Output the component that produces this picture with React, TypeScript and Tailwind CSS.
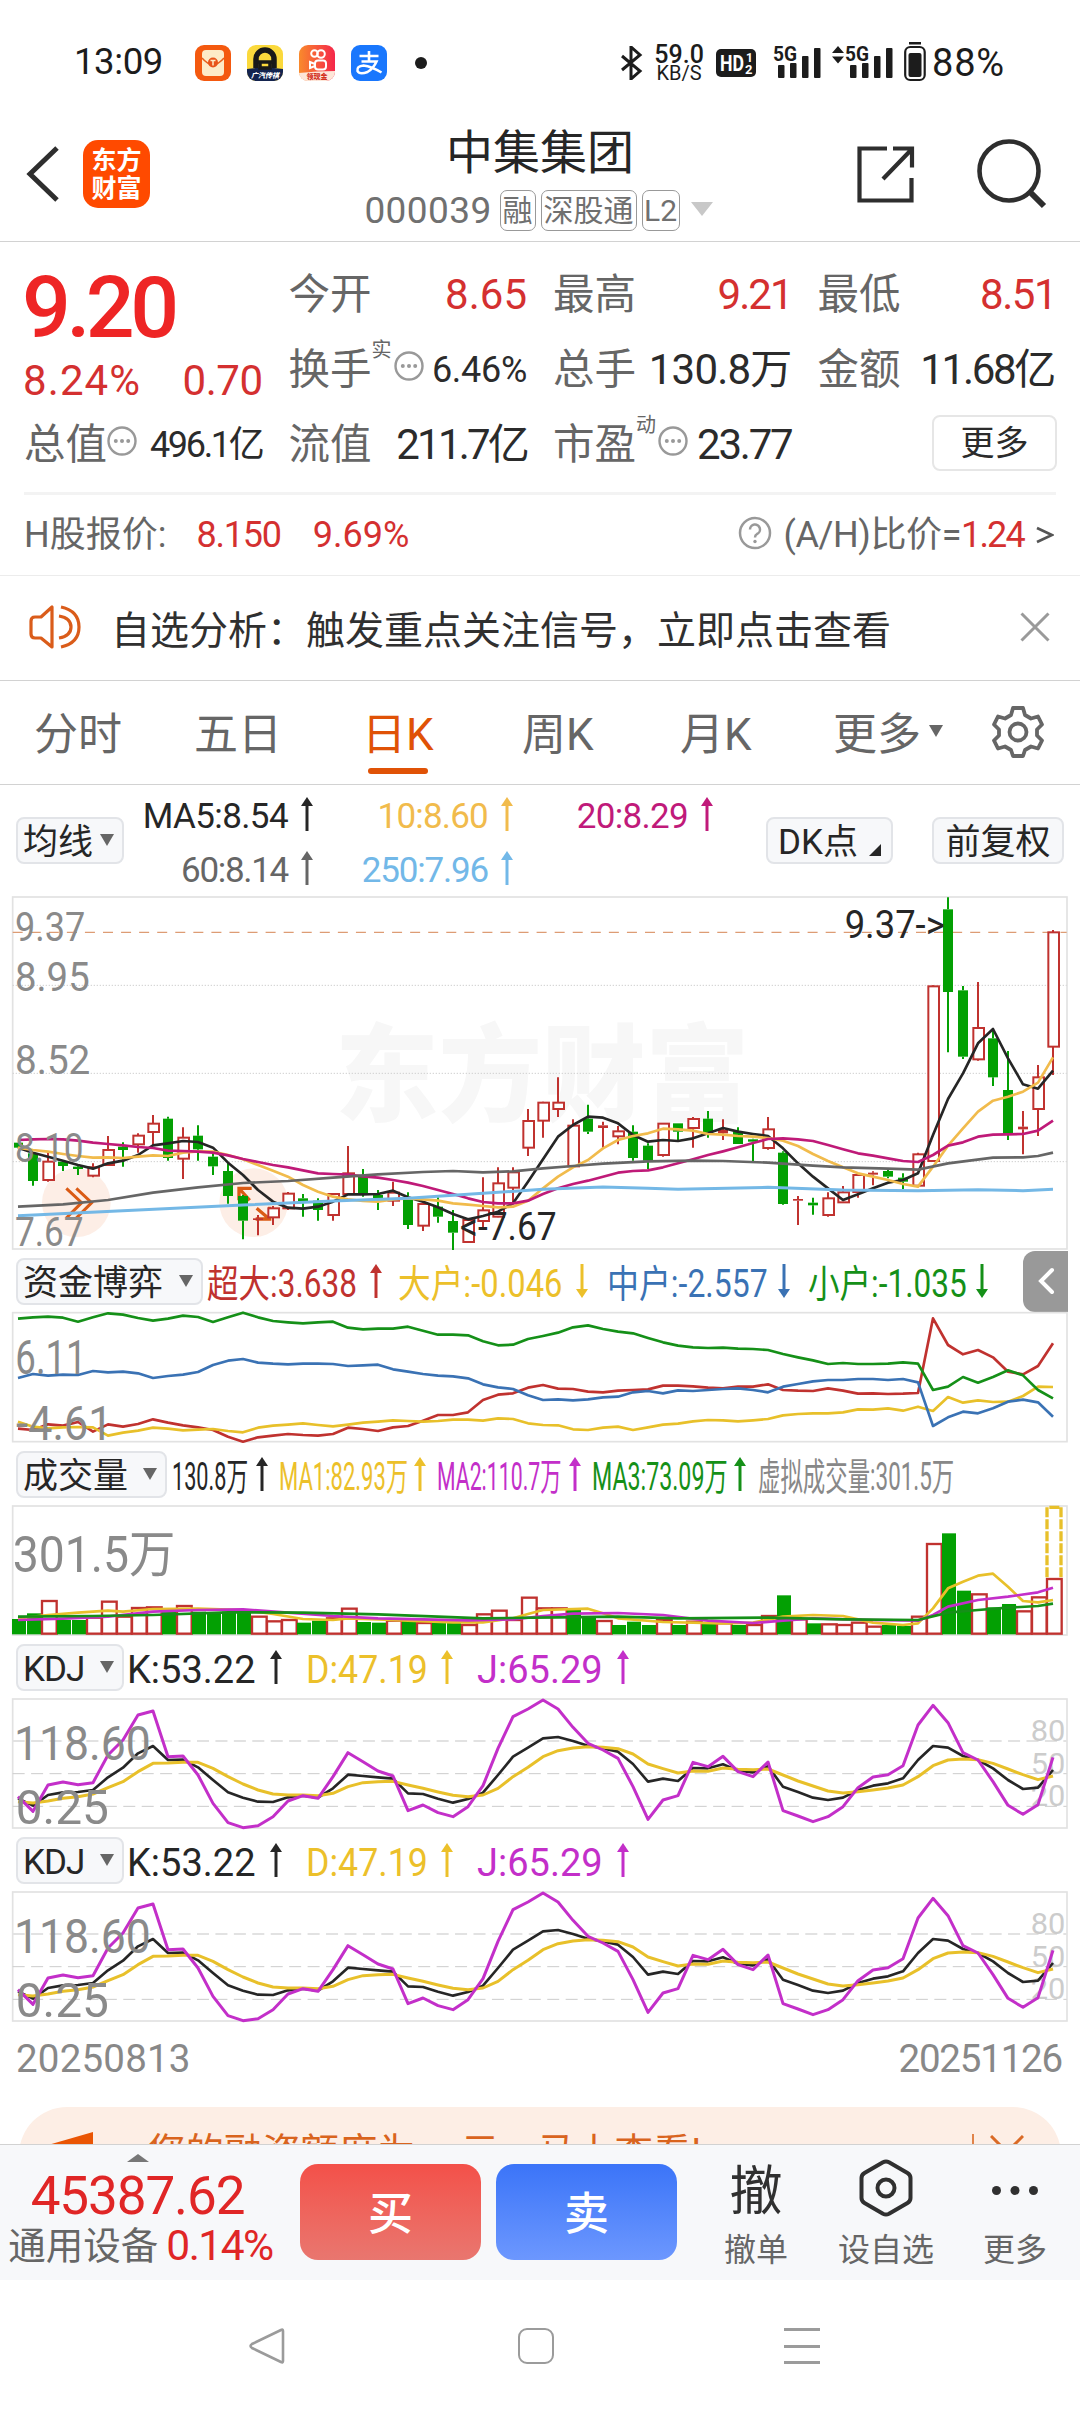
import type { ReactNode } from 'react';
import clsx from 'clsx';

type Point = [number, number];
// wick top, body top, body bottom, wick bottom, direction
type Candle = [number, number, number, number, 'r' | 'g'];
type Bar = [number, 'r' | 'g'];

const RED = '#c0322f';
const GREEN = '#03a003';
const YELLOW = '#e8c02a';
const PURPLE = '#c32fc9';
const BLUE = '#3a72b4';
const DARK = '#262626';

// every chart uses 3 units per pixel, one trading day is 15px wide
const dayX = (i: number) => 54 + i * 45;

const candles: Candle[] = [
  [788, 788, 803, 803, 'g'], [820, 820, 903, 917, 'g'], [815, 845, 900, 905, 'r'], [840, 845, 858, 873, 'g'],
  [855, 860, 867, 885, 'g'], [850, 862, 887, 892, 'r'], [768, 810, 855, 857, 'r'], [787, 800, 810, 860, 'g'],
  [760, 767, 793, 818, 'r'], [705, 731, 756, 795, 'r'], [710, 716, 834, 842, 'g'], [742, 773, 836, 897, 'r'],
  [736, 767, 808, 842, 'g'], [820, 830, 859, 885, 'g'], [850, 873, 948, 971, 'g'], [945, 948, 1022, 1078, 'g'],
  [1005, 1015, 1020, 1066, 'r'], [978, 985, 1012, 1035, 'r'], [936, 941, 985, 990, 'r'], [942, 955, 965, 1010, 'g'],
  [955, 962, 990, 1022, 'g'], [942, 942, 1005, 1022, 'r'], [798, 880, 942, 942, 'r'], [867, 890, 940, 950, 'g'],
  [930, 945, 960, 990, 'g'], [905, 938, 962, 978, 'r'], [937, 955, 1035, 1047, 'g'], [972, 972, 1037, 1053, 'r'],
  [952, 980, 1010, 1028, 'g'], [990, 1023, 1058, 1110, 'g'], [1018, 1020, 1086, 1088, 'r'], [892, 991, 1023, 1042, 'r'],
  [862, 910, 1010, 1012, 'r'], [862, 877, 923, 970, 'r'], [687, 723, 803, 828, 'r'], [665, 668, 722, 773, 'r'],
  [592, 668, 687, 711, 'r'], [718, 737, 859, 862, 'r'], [674, 716, 755, 762, 'g'], [725, 736, 744, 803, 'r'],
  [738, 754, 769, 793, 'r'], [736, 755, 834, 842, 'g'], [790, 797, 842, 867, 'g'], [730, 731, 825, 830, 'r'],
  [730, 730, 755, 783, 'g'], [711, 717, 744, 803, 'r'], [693, 716, 760, 773, 'g'], [718, 750, 760, 780, 'r'],
  [742, 755, 792, 792, 'g'], [776, 778, 785, 845, 'g'], [711, 748, 804, 809, 'r'], [814, 818, 972, 974, 'g'],
  [948, 957, 962, 1035, 'r'], [953, 968, 976, 1004, 'g'], [937, 955, 1005, 1010, 'r'], [918, 937, 967, 967, 'r'],
  [880, 885, 936, 953, 'r'], [874, 878, 884, 916, 'r'], [867, 873, 890, 895, 'g'], [880, 893, 905, 927, 'g'],
  [818, 823, 917, 920, 'r'], [316, 319, 843, 845, 'r'], [52, 88, 336, 517, 'g'], [318, 331, 530, 537, 'g'],
  [306, 444, 538, 542, 'r'], [450, 475, 592, 618, 'g'], [513, 630, 762, 780, 'g'], [693, 740, 748, 823, 'r'],
  [555, 592, 687, 768, 'r'], [150, 157, 500, 585, 'r'],
];

const ma5 = [
  803, 818, 830, 842, 855, 866, 850, 842, 825, 796, 790, 783, 786, 803, 848, 885, 930, 965, 983, 986, 980, 965, 943, 943,
  942, 932, 952, 965, 982, 1002, 1018, 1008, 995, 970, 905, 838, 770, 735, 710, 713, 730, 765, 785, 780, 783, 775, 760,
  744, 755, 762, 768, 805, 850, 890, 925, 960, 943, 925, 908, 900, 880, 765, 657, 580, 490, 447, 535, 613, 626, 572,
];
const ma10 = [
  803, 810, 815, 822, 828, 833, 832, 834, 830, 826, 828, 818, 814, 815, 825, 838, 855, 872, 890, 915, 935, 950, 958, 963,
  965, 958, 955, 958, 962, 970, 974, 978, 982, 980, 962, 925, 890, 862, 840, 805, 780, 768, 760, 746, 748, 752, 762, 764,
  768, 770, 774, 782, 798, 822, 843, 862, 880, 890, 900, 912, 920, 860, 797, 745, 695, 662, 650, 635, 608, 532,
];
const ma20 = [
  780, 778, 777, 778, 782, 788, 792, 796, 801, 804, 812, 813, 815, 818, 826, 837, 846, 855, 862, 871, 880, 882, 884, 889,
  893, 900, 908, 918, 930, 942, 955, 966, 970, 970, 962, 942, 925, 912, 902, 890, 878, 873, 871, 862, 850, 838, 825, 814,
  802, 789, 777, 775, 778, 783, 795, 808, 820, 827, 835, 843, 846, 825, 797, 787, 770, 764, 763, 762, 752, 722,
];
const ma60: Point[] = [
  [0, 980], [3, 973], [6, 960], [9, 938], [12, 922], [15, 909], [18, 903], [21, 893], [24, 883], [27, 876], [29, 873],
  [31, 877], [33, 874], [35, 865], [37, 858], [39, 851], [42, 844], [45, 842], [47, 843], [50, 848], [53, 857], [55, 862],
  [58, 866], [60, 869], [62, 850], [65, 833], [67, 832], [68, 828], [69, 818],
];
const ma250: Point[] = [
  [0, 1007], [15, 975], [21, 963], [26, 955], [31, 940], [35, 928], [39, 921], [42, 925], [44, 928], [50, 922], [55, 930],
  [60, 932], [64, 929], [67, 932], [69, 928],
];

const fundGreen = [
  236, 232, 230, 233, 245, 232, 220, 224, 234, 242, 236, 227, 231, 246, 232, 218, 232, 243, 247, 250, 247, 245, 263, 268,
  266, 266, 260, 272, 284, 284, 286, 304, 316, 314, 297, 288, 278, 262, 256, 267, 275, 280, 294, 307, 317, 322, 324, 323,
  326, 327, 330, 342, 352, 361, 372, 369, 372, 372, 371, 367, 371, 450, 440, 411, 428, 411, 391, 406, 450, 475,
];
const fundBlue = [
  414, 402, 407, 404, 405, 393, 397, 395, 400, 414, 408, 404, 396, 375, 362, 357, 368, 371, 373, 371, 371, 372, 378, 376,
  374, 388, 395, 402, 407, 409, 415, 433, 442, 447, 466, 480, 478, 481, 478, 472, 470, 457, 453, 460, 451, 453, 450, 447,
  445, 450, 457, 440, 432, 424, 420, 420, 417, 417, 420, 417, 427, 558, 532, 515, 520, 505, 485, 479, 487, 530,
];
const fundRed = [
  566, 570, 553, 557, 546, 575, 553, 560, 552, 538, 548, 556, 562, 570, 590, 605, 592, 587, 582, 585, 587, 582, 563, 567,
  573, 562, 558, 542, 525, 525, 517, 480, 464, 460, 443, 435, 446, 447, 455, 457, 452, 450, 448, 437, 437, 439, 443, 445,
  440, 440, 433, 450, 452, 453, 445, 452, 461, 460, 462, 461, 459, 235, 315, 343, 330, 352, 395, 403, 378, 310,
];
const fundYellow = [
  545, 560, 565, 562, 561, 562, 587, 578, 572, 563, 566, 571, 569, 567, 573, 577, 563, 557, 554, 550, 555, 559, 554, 548,
  545, 541, 543, 545, 543, 539, 539, 542, 535, 537, 550, 555, 556, 568, 570, 563, 560, 570, 562, 554, 551, 544, 540, 541,
  544, 541, 537, 526, 522, 520, 520, 517, 508, 509, 505, 512, 500, 513, 471, 488, 481, 486, 485, 468, 440, 441,
];

const volumes: Bar[] = [
  [1137, 'g'], [1120, 'g'], [1083, 'r'], [1140, 'g'], [1140, 'g'], [1133, 'r'], [1085, 'r'], [1130, 'r'], [1104, 'r'],
  [1102, 'r'], [1115, 'g'], [1098, 'r'], [1115, 'g'], [1122, 'g'], [1115, 'g'], [1118, 'g'], [1130, 'r'], [1144, 'r'],
  [1140, 'r'], [1148, 'g'], [1142, 'g'], [1135, 'r'], [1106, 'r'], [1146, 'g'], [1148, 'g'], [1142, 'r'], [1143, 'g'],
  [1149, 'r'], [1148, 'g'], [1147, 'g'], [1155, 'r'], [1123, 'r'], [1112, 'r'], [1140, 'r'], [1073, 'r'], [1105, 'r'],
  [1105, 'r'], [1108, 'g'], [1130, 'g'], [1143, 'r'], [1155, 'g'], [1145, 'g'], [1155, 'g'], [1140, 'r'], [1155, 'g'],
  [1145, 'r'], [1150, 'g'], [1150, 'r'], [1155, 'g'], [1155, 'r'], [1128, 'r'], [1066, 'g'], [1138, 'r'], [1150, 'g'],
  [1153, 'r'], [1155, 'r'], [1148, 'r'], [1160, 'r'], [1155, 'g'], [1158, 'g'], [1130, 'r'], [912, 'r'], [880, 'g'],
  [1052, 'g'], [1063, 'r'], [1102, 'g'], [1092, 'g'], [1114, 'r'], [1072, 'r'], [1017, 'r'],
];
const volMa1: Point[] = [
  [0, 1135], [2, 1125], [4, 1118], [6, 1112], [7, 1115], [9, 1107], [12, 1106], [15, 1110], [17, 1122], [19, 1137],
  [21, 1140], [22, 1135], [24, 1138], [26, 1142], [29, 1147], [31, 1147], [33, 1135], [34, 1122], [35, 1110], [38, 1106],
  [39, 1120], [40, 1135], [43, 1146], [47, 1150], [49, 1148], [51, 1130], [53, 1125], [55, 1128], [56, 1138], [57, 1148],
  [59, 1155], [60, 1150], [61, 1105], [62, 1045], [63, 1025], [64, 1007], [65, 1001], [66, 1040], [67, 1083], [68, 1087],
  [69, 1080],
];
const volMa2: Point[] = [
  [0, 1140], [3, 1136], [6, 1130], [9, 1115], [12, 1110], [15, 1108], [18, 1118], [21, 1128], [24, 1135], [30, 1141],
  [33, 1138], [35, 1128], [37, 1121], [40, 1119], [43, 1125], [46, 1142], [49, 1149], [51, 1142], [53, 1135], [57, 1140],
  [60, 1142], [61, 1125], [62, 1100], [64, 1080], [66, 1070], [68, 1057], [69, 1043],
];
const volMa3: Point[] = [
  [0, 1130], [5, 1128], [9, 1125], [14, 1117], [19, 1118], [24, 1123], [28, 1130], [31, 1135], [36, 1132], [40, 1130],
  [44, 1135], [50, 1133], [55, 1138], [60, 1140], [62, 1118], [64, 1110], [66, 1103], [68, 1098], [69, 1091],
];

const kdjJ = [
  470, 514, 435, 426, 434, 428, 345, 300, 225, 213, 350, 348, 405, 490, 548, 563, 557, 530, 483, 467, 475, 410, 338, 365,
  393, 408, 512, 495, 518, 530, 500, 437, 325, 230, 207, 180, 207, 262, 310, 330, 355, 440, 538, 480, 467, 367, 380, 349,
  395, 410, 366, 512, 528, 545, 530, 500, 443, 411, 404, 377, 255, 196, 248, 338, 360, 425, 496, 523, 494, 352,
];
const kdjK = [
  475, 497, 465, 457, 456, 450, 412, 383, 340, 318, 360, 359, 382, 420, 457, 473, 485, 486, 472, 467, 473, 445, 404, 408,
  412, 416, 460, 462, 476, 488, 477, 458, 405, 350, 323, 295, 291, 303, 317, 325, 335, 372, 425, 416, 423, 384, 385, 373,
  392, 397, 379, 440, 456, 473, 480, 473, 450, 437, 430, 415, 360, 318, 323, 348, 360, 385, 420, 447, 443, 390,
];
const kdjD = [
  485, 489, 483, 475, 470, 462, 443, 425, 395, 370, 369, 367, 367, 385, 410, 432, 450, 462, 465, 465, 467, 460, 440, 428,
  425, 424, 435, 445, 456, 466, 470, 465, 445, 410, 382, 350, 332, 324, 320, 322, 326, 342, 372, 386, 399, 393, 394, 384,
  388, 389, 387, 405, 423, 438, 453, 459, 455, 450, 444, 435, 410, 377, 360, 357, 359, 370, 387, 404, 419, 408,
];

function Line({ data, color, width = 8 }: { data: (number | Point)[]; color: string; width?: number }) {
  const points = data
    .map((d, i) => (typeof d === 'number' ? `${dayX(i)},${d}` : `${dayX(d[0])},${d[1]}`))
    .join(' ');
  return <polyline points={points} fill="none" stroke={color} strokeWidth={width} strokeLinejoin="round" />;
}

function AxisLabel({ x, y, w, size, color = '#8a8a8a', children }: {
  x: number; y: number; w: number; size: number; color?: string; children: string;
}) {
  return (
    <text x={x} y={y} fontSize={size} fill={color} textLength={w} lengthAdjust="spacingAndGlyphs">
      {children}
    </text>
  );
}

function Frame({ top, bottom }: { top: number; bottom: number }) {
  return <rect x="38" y={top} width="3163" height={bottom - top} fill="none" stroke="#e2e2e2" strokeWidth="5" />;
}

function PriceChart() {
  return (
    <svg viewBox="0 45 3240 1068" className="block w-[1080px] h-[356px] overflow-visible">
      <text x="1005" y="700" fontSize="318" fontWeight="900" fill="#f7f7f7" textLength="1242" lengthAdjust="spacingAndGlyphs">东方财富</text>
      <Frame top={51} bottom={1107} />
      {[316, 580, 845].map((y) => (
        <line key={y} x1="38" x2="3200" y1={y} y2={y} stroke="#cfcfcf" strokeWidth="3" strokeDasharray="4 5" />
      ))}
      <circle cx="229" cy="968" r="103" fill="#fdeee6" />
      <circle cx="761" cy="968" r="103" fill="#fdeee6" />
      <line x1="38" x2="3200" y1="157" y2="157" stroke="#dd9c74" strokeWidth="4" strokeDasharray="30 24.2" />
      <g fill="none" stroke="#da5a14" strokeWidth="9">
        <path d="M199 925l46 43-46 46M229 925l46 43-46 46" />
        <path d="M755 925h-38v36M719 927l30 34M770 985l38 32M809 980v37h-42" strokeWidth="10" />
      </g>
      {candles.map(([hi, top, bottom, lo, dir], i) => {
        const x = dayX(i);
        const solid = dir === 'g' || bottom - top < 12;
        const color = dir === 'g' ? GREEN : RED;
        return (
          <g key={i} stroke={color} strokeWidth="6">
            <line x1={x} x2={x} y1={hi} y2={top} />
            <line x1={x} x2={x} y1={bottom} y2={lo} />
            {solid ? (
              <rect x={i ? x - 15 : 42} y={top} width={i ? 30 : 27} height={bottom - top} fill={color} stroke="none" />
            ) : (
              <rect x={x - 14} y={top} width="32" height={bottom - top} fill="#fff" />
            )}
          </g>
        );
      })}
      <Line data={ma5} color={DARK} />
      <Line data={ma10} color="#f1bb4c" />
      <Line data={ma20} color="#bf1a78" />
      <Line data={ma60} color="#666" />
      <Line data={ma250} color="#74b8e6" width={9} />
      <AxisLabel x={45} y={182} w={211} size={120}>9.37</AxisLabel>
      <AxisLabel x={45} y={334} w={224} size={120}>8.95</AxisLabel>
      <AxisLabel x={45} y={583} w={226} size={120}>8.52</AxisLabel>
      <AxisLabel x={45} y={847} w={206} size={120}>8.10</AxisLabel>
      <AxisLabel x={45} y={1099} w={206} size={120}>7.67</AxisLabel>
      <AxisLabel x={1380} y={1081} w={290} size={114} color={DARK}>{'<-7.67'}</AxisLabel>
      <AxisLabel x={2534} y={175} w={300} size={118} color={DARK}>{'9.37->'}</AxisLabel>
    </svg>
  );
}

function FundChart() {
  return (
    <svg viewBox="0 213 3240 399" className="block w-[1080px] h-[133px] overflow-visible">
      <Frame top={218} bottom={605} />
      <Line data={fundRed} color={RED} />
      <Line data={fundYellow} color={YELLOW} />
      <Line data={fundBlue} color={BLUE} />
      <Line data={fundGreen} color="#159018" />
      <AxisLabel x={46} y={403} w={214} size={144}>6.11</AxisLabel>
      <AxisLabel x={48} y={601} w={290} size={144}>-4.61</AxisLabel>
    </svg>
  );
}

function VolumeChart() {
  return (
    <svg viewBox="0 792 3240 399" className="block w-[1080px] h-[133px] overflow-visible">
      <Frame top={798} bottom={1185} />
      {volumes.map(([top, dir], i) =>
        dir === 'g' ? (
          <rect key={i} x={dayX(i) - 18} y={top} width="42" height={1183 - top} fill={GREEN} />
        ) : (
          <rect key={i} x={dayX(i) - 18} y={top} width="44" height={1181 - top} fill="#fff" stroke={RED} strokeWidth="7" />
        )
      )}
      <path d="M3141 1012V800M3183 1012V800M3148 802h30" fill="none" stroke={YELLOW} strokeWidth="10" strokeDasharray="30 6" />
      <Line data={volMa1} color={YELLOW} />
      <Line data={volMa2} color={PURPLE} />
      <Line data={volMa3} color="#159018" />
      <AxisLabel x={38} y={995} w={488} size={150}>301.5万</AxisLabel>
    </svg>
  );
}

function KdjChart() {
  return (
    <svg viewBox="0 171 3240 399" className="block w-[1080px] h-[133px] overflow-visible">
      <Frame top={177} bottom={564} />
      {[303, 401, 499].map((y, i) => (
        <g key={y}>
          <line
            x1="38" x2="3200" y1={y} y2={y} stroke={i ? '#cccccc' : '#e2e2e2'}
            strokeWidth={i ? 3 : 6} strokeDasharray="36 19.3"
          />
          <AxisLabel x={3092} y={y} w={104} size={90} color="#cccccc">{['80', '50', '20'][i]}</AxisLabel>
        </g>
      ))}
      <Line data={kdjK} color={DARK} />
      <Line data={kdjD} color={YELLOW} width={9} />
      <Line data={kdjJ} color={PURPLE} width={9} />
      <AxisLabel x={42} y={360} w={410} size={146}>118.60</AxisLabel>
      <AxisLabel x={47} y={553} w={280} size={146}>0.25</AxisLabel>
    </svg>
  );
}

function Arrow({ down, className }: { down?: boolean; className?: string }) {
  return (
    <svg viewBox="0 0 12 34" className={clsx('w-3 h-[34px] shrink-0', down && 'rotate-180', className)}>
      <path d="M6 0l6 9H0z" fill="currentColor" />
      <path d="M6 6v28" stroke="currentColor" strokeWidth="3" />
    </svg>
  );
}

function Caret({ className }: { className?: string }) {
  return (
    <svg viewBox="0 0 14 12" className={clsx('w-3.5 h-3 text-[#666]', className)}>
      <path d="M0 0h14L7 12z" fill="currentColor" />
    </svg>
  );
}

function Picker({ label, className }: { label: string; className: string }) {
  return (
    <button
      className={clsx(
        'flex items-center justify-between h-[47px] pl-[5px] pr-[8px] rounded-lg border-2 border-[#e2e4e8] bg-[#f7f8fa] text-[35px] leading-none text-[#262626] shrink-0',
        className
      )}
    >
      <span className="pt-[5px]">{label}</span>
      <Caret />
    </button>
  );
}

function Indicator({ className, scale, arrow, children }: {
  className: string; scale: string; arrow?: 'up' | 'down'; children: string;
}) {
  return (
    <div className={clsx('flex items-center justify-between shrink-0', className)}>
      <span className="w-0 pt-[5px] whitespace-nowrap">
        <span className={clsx('inline-block origin-left', scale)}>{children}</span>
      </span>
      {arrow && <Arrow down={arrow === 'down'} />}
    </div>
  );
}

function MoreDot() {
  return (
    <svg viewBox="0 0 30 30" className="size-[30px] shrink-0 mb-[7px]">
      <circle cx="15" cy="15" r="13.500" fill="none" stroke="#999" strokeWidth="2.400" />
      <g fill="#999">
        <circle cx="8.800" cy="15" r="2" />
        <circle cx="15" cy="15" r="2" />
        <circle cx="21.200" cy="15" r="2" />
      </g>
    </svg>
  );
}

function Quote({ label, sup, dot, children }: { label: string; sup?: string; dot?: boolean; children: ReactNode }) {
  return (
    <div className="flex items-center h-[75px] whitespace-nowrap">
      <span className="text-[41.5px] text-[#666]">{label}</span>
      {sup && <span className="text-xl text-[#666] -mt-10 w-[22px] shrink-0">{sup}</span>}
      {dot && <MoreDot />}
      <span className="flex-1 flex justify-end">{children}</span>
    </div>
  );
}

function Signal({ arrows }: { arrows?: boolean }) {
  return (
    <svg viewBox="0 0 64 40" className="w-16 h-10 overflow-visible">
      {arrows && <path d="M0 10l6-7 6 7zM0 13.500h12l-6 7z" fill="#1c1c1c" />}
      <text x="13" y="18" fontSize="21" fontWeight="700" fill="#1c1c1c" textLength="24" lengthAdjust="spacingAndGlyphs">5G</text>
      <g fill="#1c1c1c">
        <rect x="18" y="22" width="6.500" height="13" rx="1" />
        <rect x="30" y="20" width="6.500" height="15" rx="1" />
        <rect x="42" y="13" width="6.500" height="22" rx="1" />
        <rect x="54" y="5" width="6.500" height="30" rx="1" />
      </g>
    </svg>
  );
}

function StatusBar() {
  return (
    <div className="flex items-center h-[125px] pl-[74px] pr-[75px] text-[#1c1c1c] leading-none">
      <span className="w-[121px] text-[36.5px] tracking-[-0.4px]">13:09</span>
      <div className="flex items-center gap-4">
        <svg viewBox="0 0 36 36" className="size-9">
          <rect width="36" height="36" rx="9" fill="#f4590f" />
          <rect x="7" y="5" width="22" height="26" rx="4" fill="#fdebc8" />
          <path d="M7 13q11 13 22 0" fill="none" stroke="#e8601c" strokeWidth="1.500" />
          <circle cx="18" cy="17.500" r="5" fill="#e8541a" />
          <path d="M15.500 15.500h5M18 15.500v5" stroke="#fdebc8" strokeWidth="1.500" />
        </svg>
        <svg viewBox="0 0 36 36" className="size-9">
          <rect width="36" height="36" rx="9" fill="#fbd93c" />
          <path d="M0 24q18-3 36 0v3a9 9 0 0 1-9 9H9a9 9 0 0 1-9-9z" fill="#14244f" />
          <path d="M9 23V14a9 9 0 0 1 18 0v9" fill="none" stroke="#191919" strokeWidth="5.500" />
          <path d="M9 17h18M13 17v6h10v-6" stroke="#191919" strokeWidth="3.500" fill="none" />
          <text x="18" y="32.500" fontSize="7" fontWeight="900" fontStyle="italic" fill="#fff" textAnchor="middle">广汽传祺</text>
        </svg>
        <svg viewBox="0 0 36 36" className="size-9">
          <defs>
            <linearGradient id="video" x1="0" x2="1">
              <stop offset="0" stopColor="#f98a2c" />
              <stop offset="1" stopColor="#f5264a" />
            </linearGradient>
          </defs>
          <rect width="36" height="36" rx="9" fill="url(#video)" />
          <path d="M0 28q18-2 36-2v1a9 9 0 0 1-9 9H9a9 9 0 0 1-9-8z" fill="#fde6d8" />
          <g fill="none" stroke="#fff" strokeWidth="2">
            <circle cx="15.500" cy="8.500" r="3.300" />
            <circle cx="22" cy="9" r="3.800" />
            <rect x="16" y="15.500" width="11" height="9" rx="3" />
            <path d="M16 19l-5-2v6l5-2" />
          </g>
          <text x="18" y="34" fontSize="7" fontWeight="900" fill="#d3321f" textAnchor="middle">领现金</text>
        </svg>
        <svg viewBox="0 0 36 36" className="size-9">
          <rect width="36" height="36" rx="9" fill="#1977fd" />
          <path
            d="M8.500 11h19M18 6v10M10.500 16.500h15q-3 7-9 10.500-8 3-10-1-1-5 6-5.500 8 1 18 7"
            fill="none" stroke="#fff" strokeWidth="2.600"
          />
        </svg>
      </div>
      <span className="size-3 ml-7 rounded-full bg-[#1c1c1c]" />
      <div className="flex items-center ml-auto">
        <svg viewBox="0 0 22 34" className="w-[22px] h-[34px] mr-3">
          <path d="M1 10l18 15-9 8V1l9 8L1 24" fill="none" stroke="#1c1c1c" strokeWidth="3" />
        </svg>
        <div className="flex flex-col items-center w-12 mr-[13px] mt-0.5">
          <span className="text-[25px] font-medium leading-[19px]">59.0</span>
          <span className="text-[20px] leading-[18px]">KB/S</span>
        </div>
        <svg viewBox="0 0 40 28" className="w-10 h-7 mr-1">
          <rect width="40" height="28" rx="5" fill="#1c1c1c" />
          <text x="4" y="22" fontSize="22" fontWeight="700" fill="#fff" textLength="24" lengthAdjust="spacingAndGlyphs">HD</text>
          <text x="30" y="13" fontSize="12" fontWeight="700" fill="#fff">1</text>
          <text x="29" y="25" fontSize="13" fontWeight="700" fill="#fff">2</text>
        </svg>
        <Signal />
        <span className="w-2" />
        <Signal arrows />
        <svg viewBox="0 0 22 40" className="w-[22px] h-10 ml-2 mr-[6px] -mt-0.5">
          <rect x="5" y="0" width="12" height="2.500" fill="#1c1c1c" />
          <rect x="1.200" y="5" width="19.500" height="33" rx="5" fill="none" stroke="#1c1c1c" strokeWidth="2.200" />
          <rect x="4.500" y="11" width="13" height="24" rx="2" fill="#1c1c1c" />
        </svg>
        <span className="text-[38px] tracking-[0.8px]">88%</span>
      </div>
    </div>
  );
}

function Header() {
  return (
    <header className="flex items-start h-[117px] pl-[26px] pr-[33px] border-b border-[#d2d2d2] leading-none">
      <svg viewBox="0 0 34 56" className="w-[34px] h-14 mt-[21px] shrink-0">
        <path d="M31 2L4 28l27 26" fill="none" stroke="#2e2e2e" strokeWidth="5" />
      </svg>
      <div className="flex flex-col items-center justify-center gap-[3px] w-[67px] h-[68px] ml-[23px] mt-[15px] rounded-[15px] bg-[#ff4a00] text-white text-[25px] font-bold shrink-0">
        <span>东方</span>
        <span>财富</span>
      </div>
      <div className="flex flex-col items-center flex-1 pt-1 pl-[74px]">
        <h1 className="text-[47px]">中集集团</h1>
        <div className="flex items-center gap-[5px] mt-[14px] -ml-[3px] text-[30px] text-[#707070] whitespace-nowrap">
          <span className="text-[37px] tracking-[0.4px] mr-[3px]">000039</span>
          <span className="flex items-center justify-center w-9 h-[41px] border-[1.5px] border-[#999] rounded-[7px]">融</span>
          <span className="flex items-center justify-center w-[96px] h-[41px] border-[1.5px] border-[#999] rounded-[7px]">深股通</span>
          <span className="flex items-center justify-center w-[38px] h-[41px] border-[1.5px] border-[#999] rounded-[7px]">L2</span>
          <svg viewBox="0 0 22 14" className="w-[22px] h-3.5 ml-1.5 -mt-1">
            <path d="M0 0h22L11 14z" fill="#c8c8c8" />
          </svg>
        </div>
      </div>
      <svg viewBox="0 0 60 60" className="size-[60px] mt-5 mr-[61px] shrink-0">
        <path d="M31 3.500H3.500v52h52V33M37 3.500h19v19M56 4L27 34" fill="none" stroke="#2e2e2e" strokeWidth="4.200" />
      </svg>
      <svg viewBox="0 0 70 70" className="size-[70px] mt-[14px] shrink-0">
        <circle cx="32" cy="32" r="29.500" fill="none" stroke="#2e2e2e" strokeWidth="4.600" />
        <path d="M53 53l14 14" stroke="#2e2e2e" strokeWidth="6" />
      </svg>
    </header>
  );
}

function QuotePanel() {
  return (
    <section className="h-[334px] px-[24px] pt-[15px] border-b border-[#ececec] leading-none text-[#2b2b2b] text-[42px]">
      <div className="grid grid-cols-4 gap-x-[26px] h-[235px]">
        <div>
          <div className="h-[150px] text-[#d43030]">
            <div className="pt-[8px] -ml-0.5 text-[86px] font-medium tracking-[-4.500px] text-[#ee2525]">9.20</div>
            <div className="flex justify-between pt-[9px]">
              <span className="-ml-px tracking-[1.100px]">8.24%</span>
              <span className="tracking-[-0.5px]">0.70</span>
            </div>
          </div>
          <Quote label="总值" dot>
            <span className="text-[36px] tracking-[-2.300px]">496.1亿</span>
          </Quote>
        </div>
        <div>
          <Quote label="今开"><span className="text-[#d43030]">8.65</span></Quote>
          <Quote label="换手" sup="实" dot><span className="text-[36px] tracking-[-0.3px]">6.46%</span></Quote>
          <Quote label="流值"><span className="tracking-[-2.800px]">211.7亿</span></Quote>
        </div>
        <div>
          <Quote label="最高"><span className="text-[#d43030] tracking-[-2px]">9.21</span></Quote>
          <Quote label="总手"><span className="tracking-[-0.8px]">130.8万</span></Quote>
          <Quote label="市盈" sup="动" dot><span className="tracking-[-2.200px]">23.77</span></Quote>
        </div>
        <div>
          <Quote label="最低"><span className="text-[#d43030] tracking-[-1.500px]">8.51</span></Quote>
          <Quote label="金额"><span className="pr-0.5 tracking-[-2.300px]">11.68亿</span></Quote>
          <div className="flex items-center justify-end h-[75px]">
            <button className="w-[125px] h-14 -mt-1 -mr-px border-2 border-[#e6e6e6] rounded-lg text-[34px]">更多</button>
          </div>
        </div>
      </div>
      <div className="flex items-center h-[83px] border-t-[3px] border-[#f3f3f3] text-[36px] text-[#666]">
        <span>H股报价:</span>
        <span className="ml-[30px] text-[#d43030] tracking-[-1.200px]">8.150</span>
        <span className="ml-8 text-[#d43030]">9.69%</span>
        <svg viewBox="0 0 34 34" className="size-[34px] ml-auto mr-[12px] mb-1">
          <circle cx="17" cy="17" r="15" fill="none" stroke="#999" strokeWidth="2.500" />
          <path d="M12 13.500a5 5 0 1 1 7 4.500q-2 1-2 3.500" fill="none" stroke="#999" strokeWidth="2.500" />
          <circle cx="17" cy="25.500" r="1.700" fill="#999" />
        </svg>
        <span className="tracking-[-0.4px]">(A/H)比价=</span>
        <span className="text-[#d43030] tracking-[-1.800px]">1.24</span>
        <svg viewBox="0 0 18 18" className="size-[18px] ml-3 mr-0.5">
          <path d="M1 2l15 7-15 7" fill="none" stroke="#555" strokeWidth="2.800" />
        </svg>
      </div>
    </section>
  );
}

function Notice() {
  return (
    <section className="flex items-center h-[105px] pl-[29px] pr-[30px] border-b border-[#d2d2d2] text-[39px] leading-none text-[#303030]">
      <svg viewBox="0 0 54 46" className="w-[54px] h-[46px] mr-[28px] -mt-0.5">
        <g fill="none" stroke="#da5c1a" strokeWidth="3.200">
          <path d="M23 3v40L12 34H6q-4 0-4-4V17q0-4 4-4h6z" strokeLinejoin="round" />
          <path d="M30 12q12 2 12 11T30 34" />
          <path d="M32 3q18 4 18 20T32 43" />
        </g>
      </svg>
      <span className="pt-1.5">自选分析：触发重点关注信号，立即点击查看</span>
      <svg viewBox="0 0 30 30" className="size-[30px] ml-auto -mt-0.5">
        <path d="M1.500 1.500l27 27M28.500 1.500l-27 27" stroke="#9a9a9a" strokeWidth="3" />
      </svg>
    </section>
  );
}

function Tabs() {
  return (
    <nav className="flex items-center h-[104px] pl-[34px] border-b border-[#d2d2d2] text-[44px] leading-none text-[#666] whitespace-nowrap *:mt-1">
      <span className="w-[160px]">分时</span>
      <span className="w-[168px]">五日</span>
      <span className="relative w-[160px] text-[#e05206]">
        日K
        <span className="absolute left-1.5 top-[55px] w-15 h-1.5 rounded-full bg-[#e05206]" />
      </span>
      <span className="w-[158px]">周K</span>
      <span className="w-[153px]">月K</span>
      <span className="w-[96px]">更多</span>
      <Caret className="-translate-y-1" />
      <svg viewBox="0 0 52 52" className="size-[52px] ml-[49px] -translate-y-[3px]">
        <g fill="none" stroke="#666" strokeWidth="3.800" strokeLinejoin="round">
          <path d="M21 2h10l2 7 6 3.500 7-2 4 8-5 5v6l5 5-4 8-7-2-6 3.500-2 6H21l-2-6-6-3.500-7 2-4-8 5-5v-6l-5-5 4-8 7 2L19 9z" />
          <circle cx="26" cy="26" r="8.500" />
        </g>
      </svg>
    </nav>
  );
}

function AverageRow() {
  return (
    <div className="flex items-center h-[110px] pl-4 pr-4 text-[35px] leading-none text-[#262626]">
      <Picker label="均线" className="w-[108px] pl-2" />
      <div className="grid grid-cols-[176px_200px_200px] gap-y-[15px] ml-[13px] mt-0.5">
        <div className="flex items-center justify-end">
          <span className="pt-1 tracking-[-0.6px]">MA5:8.54</span><Arrow className="ml-[13px]" />
        </div>
        <div className="flex items-center justify-end text-[#f1bb4c]">
          <span className="pt-1 tracking-[-0.8px]">10:8.60</span><Arrow className="ml-[13px]" />
        </div>
        <div className="flex items-center justify-end text-[#c01a7a]">
          <span className="pt-1 tracking-[-0.7px]">20:8.29</span><Arrow className="ml-[13px]" />
        </div>
        <div className="flex items-center justify-end text-[#666]">
          <span className="pt-1 tracking-[-1.300px]">60:8.14</span><Arrow className="ml-[13px]" />
        </div>
        <div className="flex items-center justify-end text-[#72b8e8]">
          <span className="pt-1 tracking-[-1.200px]">250:7.96</span><Arrow className="ml-[13px]" />
        </div>
      </div>
      <button className="flex items-center w-[127px] h-[47px] ml-auto mr-[39px] pl-[10px] rounded-lg border-2 border-[#e2e4e8] bg-[#f7f8fa]">
        <span className="pt-[5px]">DK点</span>
        <svg viewBox="0 0 12 12" className="size-3 ml-[11px] mt-[20px]">
          <path d="M12 0v12H0z" fill="#262626" />
        </svg>
      </button>
      <button className="w-[132px] h-[47px] pt-[5px] rounded-lg border-2 border-[#e2e4e8] bg-[#f7f8fa]">前复权</button>
    </div>
  );
}

function KdjRow() {
  return (
    <div className="flex items-center h-[60px] pl-4 text-[38px] leading-none whitespace-nowrap">
      <Picker label="KDJ" className="w-[108px] tracking-[-1px]" />
      <Indicator className="w-[155px] ml-[3px] text-[#262626]" scale="scale-x-100" arrow="up">K:53.22</Indicator>
      <Indicator className="w-[147px] ml-[24px] text-[#ecc02a]" scale="scale-x-[.94]" arrow="up">D:47.19</Indicator>
      <Indicator className="w-[152px] ml-[24px] text-[#c32fc9]" scale="scale-x-100" arrow="up">J:65.29</Indicator>
    </div>
  );
}

function Banner() {
  return (
    <div className="flex h-[37px] mx-[19px] overflow-hidden">
      <div className="flex items-start w-full h-24 pt-[25px] pl-[29px] pr-[37px] rounded-[48px] bg-[#fdeee5] text-[38.5px] leading-none text-[#d9641e] whitespace-nowrap">
        <svg viewBox="0 0 46 36" className="w-[46px] h-9 shrink-0">
          <path d="M45 0v36L0 18v-5z" fill="#ea5504" />
        </svg>
        <span className="ml-[53px] pt-[2px] tracking-[-0.1px]">
          您的融资额度为<span className="inline-block w-[45px] text-center">--</span>元，马上查看!
        </span>
        <span className="w-0.5 h-10 ml-auto mr-4 mt-0.5 bg-[#e0834a]" />
        <svg viewBox="0 0 34 34" className="size-[34px] mt-[3px]">
          <path d="M1 1l32 32M33 1L1 33" stroke="#da6a26" strokeWidth="3" />
        </svg>
      </div>
    </div>
  );
}

function BottomBar() {
  return (
    <footer className="flex h-[136px] border-t border-[#d2d2d2] bg-[#f7f8fa] leading-none text-[#666]">
      <div className="flex flex-col items-center w-[300px] pr-[25px] pt-[9px] whitespace-nowrap">
        <svg viewBox="0 0 22 8" className="w-[22px] h-2">
          <path d="M11 0l11 8H0z" fill="#777" />
        </svg>
        <span className="mt-[8px] text-[53px] tracking-[-1.100px] text-[#e02626]">45387.62</span>
        <span className="flex items-center mt-[2px] ml-1.5 text-[37.5px]">
          通用设备
          <span className="ml-[8px] text-[42.5px] tracking-[-1.500px] text-[#e02626]">0.14%</span>
        </span>
      </div>
      <button className="w-[181px] h-24 pt-1 mt-[19px] rounded-[18px] bg-linear-to-b from-[#f35049] to-[#e9766f] text-[45px] font-medium text-white">买</button>
      <button className="w-[181px] h-24 pt-1 mt-[19px] ml-[15px] rounded-[18px] bg-linear-to-b from-[#3b74f8] to-[#6c97fe] text-[45px] font-medium text-white">卖</button>
      <div className="flex flex-col items-center w-[90px] ml-[34px] pt-[21px] text-[32px]">
        <span className="text-[53px] text-[#303030]">撤</span>
        <span className="mt-[15px]">撤单</span>
      </div>
      <div className="flex flex-col items-center w-[110px] ml-[30px] pt-[14px] text-[32px]">
        <svg viewBox="0 0 54 58" className="w-[54px] h-[58px]">
          <g fill="none" stroke="#303030" strokeWidth="4" strokeLinejoin="round">
            <path d="M24 3.300q3-1.600 6 0L48.500 14q3 1.800 3 5v20q0 3.200-3 5L30 54.700q-3 1.600-6 0L5.500 44q-3-1.800-3-5V19q0-3.200 3-5z" />
            <circle cx="27" cy="29" r="8.500" />
          </g>
        </svg>
        <span className="mt-[17px]">设自选</span>
      </div>
      <div className="flex flex-col items-center w-[80px] ml-[34px] pt-[41px] text-[32px]">
        <svg viewBox="0 0 46 9" className="w-[46px] h-[9px]">
          <g fill="#303030">
            <circle cx="4.500" cy="4.500" r="4.500" />
            <circle cx="23" cy="4.500" r="4.500" />
            <circle cx="41.500" cy="4.500" r="4.500" />
          </g>
        </svg>
        <span className="mt-[39px]">更多</span>
      </div>
    </footer>
  );
}

function SystemNav() {
  return (
    <div className="flex items-center h-[132px] pl-[249px]">
      <svg viewBox="0 0 36 36" className="size-9">
        <path d="M34 3v30q0 2-2 1L3 20q-3-2 0-4L32 2q2-1 2 1z" fill="none" stroke="#9b9b9b" strokeWidth="2.600" />
      </svg>
      <span className="size-9 ml-[233px] border-[2.6px] border-[#9b9b9b] rounded-[9px]" />
      <div className="flex flex-col justify-between w-9 h-9 ml-[230px]">
        <span className="h-[3px] bg-[#9b9b9b]" />
        <span className="h-[3px] bg-[#9b9b9b]" />
        <span className="h-[3px] bg-[#9b9b9b]" />
      </div>
    </div>
  );
}

export default function App() {
  return (
    <div className="w-[1080px] h-[2412px] overflow-hidden bg-white text-[#262626] font-[Roboto,'Noto_Sans_CJK_SC',sans-serif]">
      <StatusBar />
      <Header />
      <QuotePanel />
      <Notice />
      <Tabs />
      <AverageRow />
      <PriceChart />
      <div className="flex items-center h-[60px] pl-4 text-[38px] leading-none whitespace-nowrap">
        <Picker label="资金博弈" className="w-[187px]" />
        <Indicator className="w-[175px] ml-1 text-[#c0322f]" scale="scale-x-[.83]" arrow="up">超大:3.638</Indicator>
        <Indicator className="w-[190px] ml-[16px] text-[#ecc02a]" scale="scale-x-[.86]" arrow="down">大户:-0.046</Indicator>
        <Indicator className="w-[183px] ml-[19px] text-[#3a72b4]" scale="scale-x-[.84]" arrow="down">中户:-2.557</Indicator>
        <Indicator className="w-[180px] ml-[18px] text-[#159018]" scale="scale-x-[.83]" arrow="down">小户:-1.035</Indicator>
        <button className="flex items-center justify-center w-[45px] h-[61px] ml-auto mr-3 rounded-l-xl bg-[#999]">
          <svg viewBox="0 0 18 28" className="w-[18px] h-7">
            <path d="M15 3L4 14l11 11" fill="none" stroke="#fff" strokeWidth="4" strokeLinecap="round" />
          </svg>
        </button>
      </div>
      <FundChart />
      <div className="flex items-center h-[60px] pl-4 text-[38px] leading-none whitespace-nowrap">
        <Picker label="成交量" className="w-[151px]" />
        <Indicator className="w-[96px] ml-[5px] text-[#262626]" scale="scale-x-[.57]" arrow="up">130.8万</Indicator>
        <Indicator className="w-[147px] ml-[11px] text-[#ecc02a]" scale="scale-x-[.58]" arrow="up">MA1:82.93万</Indicator>
        <Indicator className="w-[144px] ml-[11px] text-[#c32fc9]" scale="scale-x-[.56]" arrow="up">MA2:110.7万</Indicator>
        <Indicator className="w-[154px] ml-[11px] text-[#159018]" scale="scale-x-[.61]" arrow="up">MA3:73.09万</Indicator>
        <Indicator className="w-[200px] ml-[12px] text-[#888]" scale="scale-x-[.59]">虚拟成交量:301.5万</Indicator>
      </div>
      <VolumeChart />
      <KdjRow />
      <KdjChart />
      <KdjRow />
      <KdjChart />
      <div className="flex items-center justify-between h-[84px] pl-4 pr-[18px] pb-[11px] text-[38.5px] leading-none text-[#888]">
        <span className="tracking-[0.2px]">20250813</span>
        <span className="tracking-[-1.200px]">20251126</span>
      </div>
      <Banner />
      <BottomBar />
      <SystemNav />
    </div>
  );
}
